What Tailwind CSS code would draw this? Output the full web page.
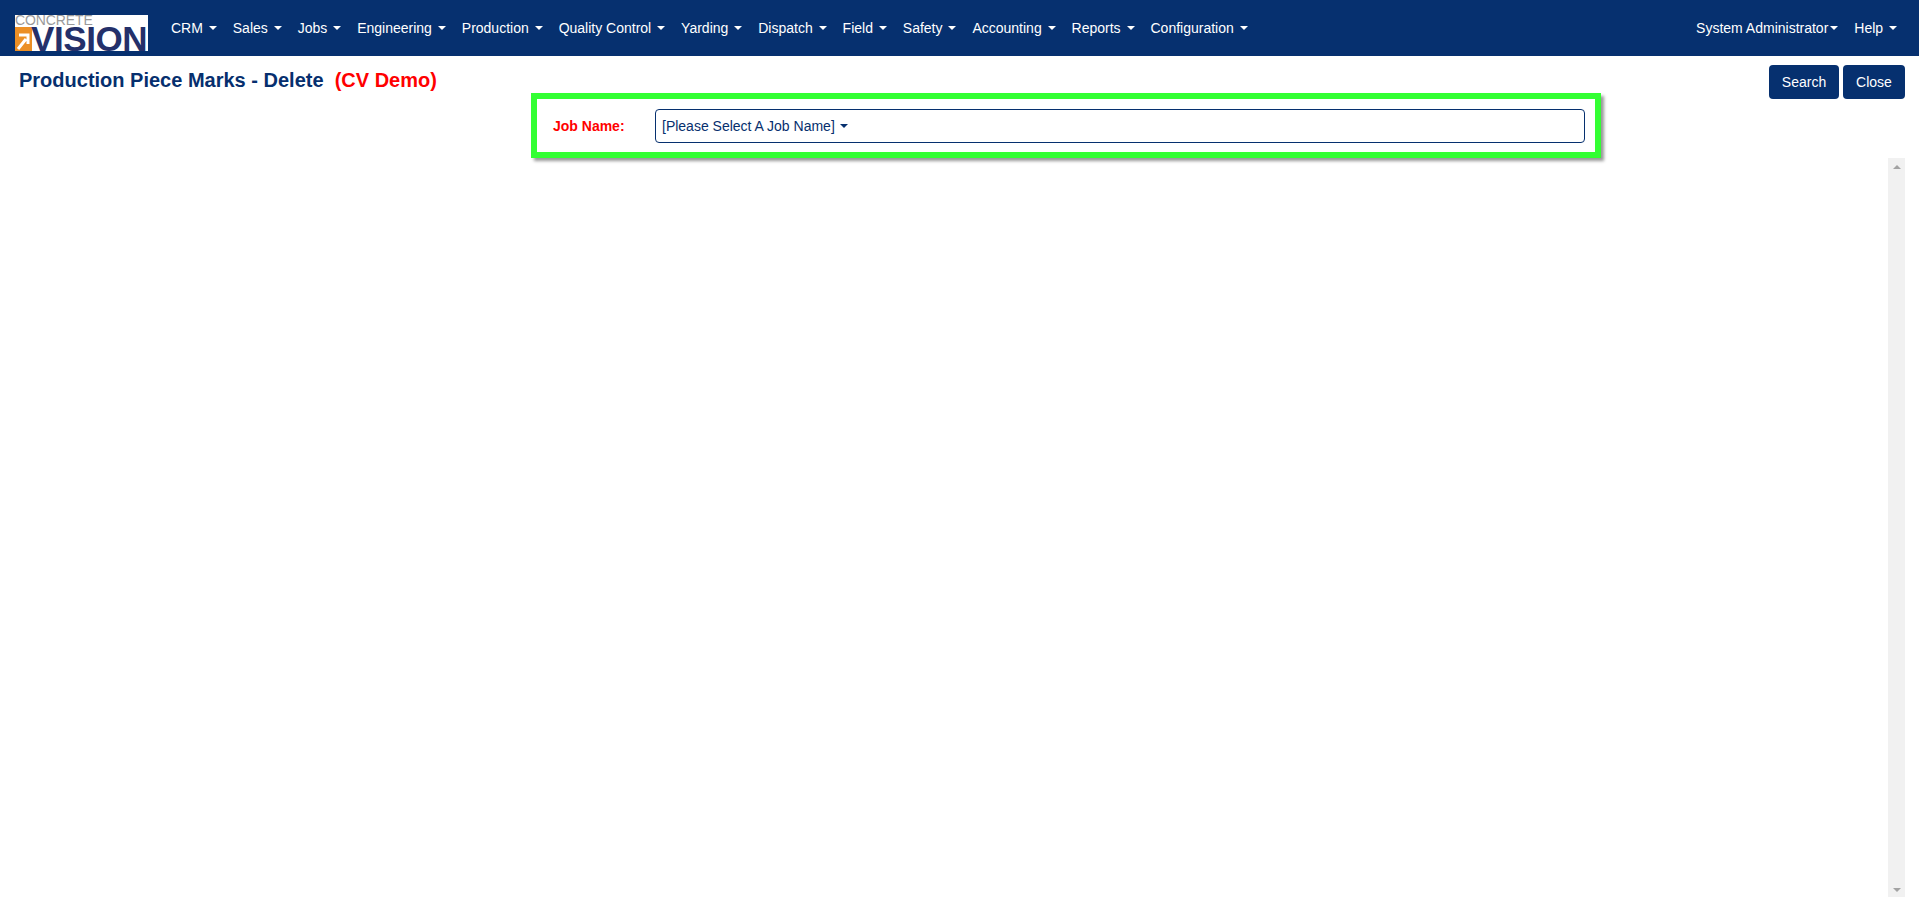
<!DOCTYPE html>
<html lang="en">
<head>
<meta charset="utf-8">
<title>Production Piece Marks - Delete</title>
<script src="https://cdn.jsdelivr.net/npm/@tailwindcss/browser@4"></script>
</head>
<body class="bg-white font-['Liberation_Sans',Arial,sans-serif] text-[#062f6e] h-[917px] overflow-hidden">
<nav class="h-[56px] bg-[#06306f] flex items-center text-white text-[14px] pl-[15px] pr-[14px]">
  <div class="w-[133px] h-[36px] mt-[10px] bg-white relative shrink-0 mr-[15px]">
    <span class="absolute left-0 top-0 text-[14px] leading-[10px] text-[#9a9a9a] tracking-[-0.1px]">CONCRETE</span>
    <svg class="absolute left-0 top-[12px]" width="19" height="24" viewBox="0 0 19 24"><rect width="17" height="24" fill="#ec8f25"/><path d="M3 22 L11 12 M4 8 H13 V17" fill="none" stroke="#fff" stroke-width="3"/></svg>
    <span class="absolute left-[16px] top-[12px] font-bold text-[35px] leading-[24px] text-[#24306a] tracking-[-0.4px]">VISION</span>
  </div>
  <div class="flex items-center">
    <a class="px-2 flex items-center whitespace-pre">CRM <i class="ml-[2px] w-0 h-0 border-x-4 border-x-transparent border-t-4 border-t-white"></i></a>
    <a class="px-2 flex items-center whitespace-pre">Sales <i class="ml-[2px] w-0 h-0 border-x-4 border-x-transparent border-t-4 border-t-white"></i></a>
    <a class="px-2 flex items-center whitespace-pre">Jobs <i class="ml-[2px] w-0 h-0 border-x-4 border-x-transparent border-t-4 border-t-white"></i></a>
    <a class="px-2 flex items-center whitespace-pre">Engineering <i class="ml-[2px] w-0 h-0 border-x-4 border-x-transparent border-t-4 border-t-white"></i></a>
    <a class="px-2 flex items-center whitespace-pre">Production <i class="ml-[2px] w-0 h-0 border-x-4 border-x-transparent border-t-4 border-t-white"></i></a>
    <a class="px-2 flex items-center whitespace-pre">Quality Control <i class="ml-[2px] w-0 h-0 border-x-4 border-x-transparent border-t-4 border-t-white"></i></a>
    <a class="px-2 flex items-center whitespace-pre">Yarding <i class="ml-[2px] w-0 h-0 border-x-4 border-x-transparent border-t-4 border-t-white"></i></a>
    <a class="px-2 flex items-center whitespace-pre">Dispatch <i class="ml-[2px] w-0 h-0 border-x-4 border-x-transparent border-t-4 border-t-white"></i></a>
    <a class="px-2 flex items-center whitespace-pre">Field <i class="ml-[2px] w-0 h-0 border-x-4 border-x-transparent border-t-4 border-t-white"></i></a>
    <a class="px-2 flex items-center whitespace-pre">Safety <i class="ml-[2px] w-0 h-0 border-x-4 border-x-transparent border-t-4 border-t-white"></i></a>
    <a class="px-2 flex items-center whitespace-pre">Accounting <i class="ml-[2px] w-0 h-0 border-x-4 border-x-transparent border-t-4 border-t-white"></i></a>
    <a class="px-2 flex items-center whitespace-pre">Reports <i class="ml-[2px] w-0 h-0 border-x-4 border-x-transparent border-t-4 border-t-white"></i></a>
    <a class="px-2 flex items-center whitespace-pre">Configuration <i class="ml-[2px] w-0 h-0 border-x-4 border-x-transparent border-t-4 border-t-white"></i></a>
  </div>
  <div class="ml-auto flex items-center">
    <a class="px-2 flex items-center whitespace-pre">System Administrator<i class="ml-[2px] w-0 h-0 border-x-4 border-x-transparent border-t-4 border-t-white"></i></a>
    <a class="px-2 flex items-center whitespace-pre">Help <i class="ml-[2px] w-0 h-0 border-x-4 border-x-transparent border-t-4 border-t-white"></i></a>
  </div>
</nav>
<div class="h-[37px] flex items-start justify-between pl-[19px] pr-[14px]">
  <h1 class="text-[20px] leading-[20px] font-bold mt-[14px] whitespace-pre">Production Piece Marks - Delete  <span class="text-[#ff0000]">(CV Demo)</span></h1>
  <div class="flex gap-[4px] mt-[9px] relative">
    <button class="h-[34px] w-[70px] rounded-[4px] bg-[#06306f] text-white text-[14px]">Search</button>
    <button class="h-[34px] w-[62px] rounded-[4px] bg-[#06306f] text-white text-[14px]">Close</button>
  </div>
</div>
<div class="ml-[531px] w-[1070px] h-[65px] border-[6px] border-[#33ff33] shadow-[3px_3px_3px_#999] flex items-center pl-[16px] pr-[10px]">
  <label class="w-[102px] shrink-0 pt-[1px] text-[14px] font-bold text-[#ff0000]">Job Name:</label>
  <div class="w-[930px] shrink-0 h-[34px] border border-[#06306f] rounded-[4px] flex items-center pl-[6px] pt-[1px] text-[14px] whitespace-pre">[Please Select A Job Name] <i class="ml-[1px] w-0 h-0 border-x-4 border-x-transparent border-t-4 border-t-[#06306f]"></i></div>
</div>
<div class="flex justify-end pr-[14px]">
  <div class="w-[17px] h-[739px] bg-[#f1f1f1] flex flex-col justify-between items-center pt-[7px] pb-[5px]">
    <i class="w-0 h-0 border-x-4 border-x-transparent border-b-4 border-b-[#a3a3a3]"></i>
    <i class="w-0 h-0 border-x-4 border-x-transparent border-t-4 border-t-[#a3a3a3]"></i>
  </div>
</div>
</body>
</html>
